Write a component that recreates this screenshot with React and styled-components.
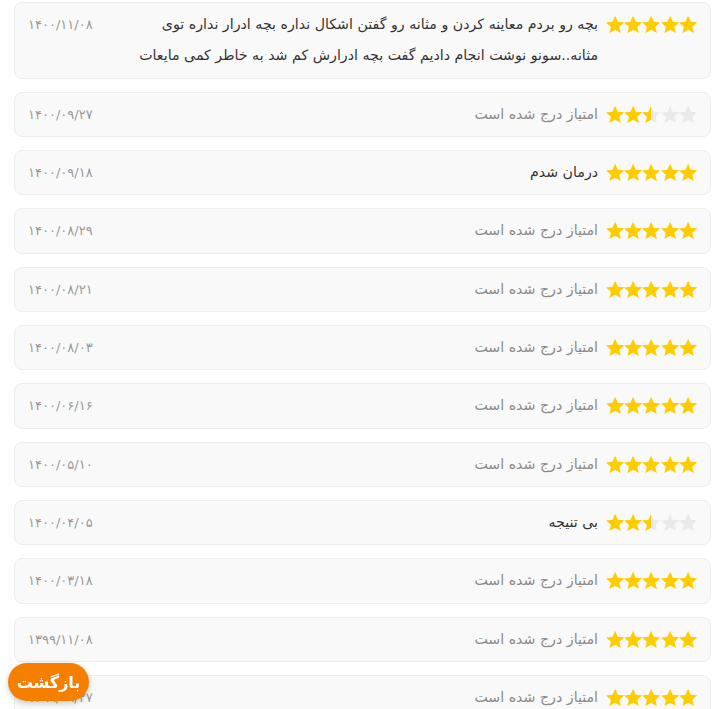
import React from "react";
import styled, { createGlobalStyle } from "styled-components";

const Global = createGlobalStyle`
  html, body { margin: 0; padding: 0; background: #fff; }
  body { font-family: "DejaVu Sans", "Noto Sans", sans-serif; }
`;

const Page = styled.div`
  direction: rtl;
  padding: 2px 4px 20px 14px;
  display: flex;
  flex-direction: column;
  gap: 13px;
`;

const Card = styled.div`
  background: #f9f9f9;
  border: 1px solid #eeeeee;
  border-radius: 8px;
  padding: 6px 13px 6px 13px;
  display: flex;
  align-items: flex-start;
  justify-content: space-between;
  gap: 16px;
`;

const Main = styled.div`
  display: flex;
  align-items: flex-start;
  gap: 8px;
  flex: 1;
  min-width: 0;
`;

const Stars = styled.div`
  direction: ltr;
  display: flex;
  gap: 0;
  height: 31.33px;
  align-items: center;
  flex-shrink: 0;
`;

const Comment = styled.div`
  font-size: 14.2px;
  line-height: 31.33px;
  color: ${(p) => (p.$muted ? "#8a8a8a" : "#333333")};
  flex: 1;
  min-width: 0;
`;

const DateText = styled.div`
  font-size: 13px;
  line-height: 31.33px;
  color: #999999;
  flex-shrink: 0;
  direction: rtl;
`;

const BackButton = styled.button`
  position: fixed;
  left: 8px;
  bottom: 8px;
  width: 81px;
  height: 38px;
  border: none;
  border-radius: 19px;
  background: #f77f00;
  color: #fff;
  font-family: "DejaVu Sans", sans-serif;
  font-weight: bold;
  font-size: 16px;
  box-shadow: 0 2px 6px rgba(0, 0, 0, 0.2);
  cursor: pointer;
`;

const STAR = "M12 0.8l3.3 7.3 7.9.8-6 5.3 1.8 7.8L12 18l-7 4 1.8-7.8-6-5.3 7.9-.8z";

function Star({ fill, id }) {
  return (
    <svg width="18.2" height="19" viewBox="0.8 0 22.4 23">
      <defs>
        <linearGradient id={id}>
          <stop offset={fill * 100 + "%"} stopColor="#ffcc00" />
          <stop offset={fill * 100 + "%"} stopColor="#eaeaea" />
        </linearGradient>
      </defs>
      <path d={STAR} fill={`url(#${id})`} />
    </svg>
  );
}

function Rating({ value, idx }) {
  return (
    <Stars>
      {[0, 1, 2, 3, 4].map((i) => {
        const f = Math.max(0, Math.min(1, value - i));
        return <Star key={i} fill={f} id={`g${idx}-${i}`} />;
      })}
    </Stars>
  );
}

const DEFAULT = "امتیاز درج شده است";

const items = [
  {
    date: "۱۴۰۰/۱۱/۰۸",
    rating: 5,
    text: "بچه رو بردم معاینه کردن و مثانه رو گفتن اشکال نداره بچه ادرار نداره توی مثانه..سونو نوشت انجام دادیم گفت بچه ادرارش کم شد به خاطر کمی مایعات",
  },
  { date: "۱۴۰۰/۰۹/۲۷", rating: 2.5 },
  { date: "۱۴۰۰/۰۹/۱۸", rating: 5, text: "درمان شدم" },
  { date: "۱۴۰۰/۰۸/۲۹", rating: 5 },
  { date: "۱۴۰۰/۰۸/۲۱", rating: 5 },
  { date: "۱۴۰۰/۰۸/۰۳", rating: 5 },
  { date: "۱۴۰۰/۰۶/۱۶", rating: 5 },
  { date: "۱۴۰۰/۰۵/۱۰", rating: 5 },
  { date: "۱۴۰۰/۰۴/۰۵", rating: 2.5, text: "بی تنیجه" },
  { date: "۱۴۰۰/۰۳/۱۸", rating: 5 },
  { date: "۱۳۹۹/۱۱/۰۸", rating: 5 },
  { date: "۱۳۹۹/۰۹/۲۷", rating: 5 },
];

export default function App() {
  return (
    <>
      <Global />
      <Page>
        {items.map((it, i) => (
          <Card key={i}>
            <Main>
              <Rating value={it.rating} idx={i} />
              <Comment $muted={!it.text}>{it.text || DEFAULT}</Comment>
            </Main>
            <DateText>{it.date}</DateText>
          </Card>
        ))}
      </Page>
      <BackButton>بازگشت</BackButton>
    </>
  );
}
